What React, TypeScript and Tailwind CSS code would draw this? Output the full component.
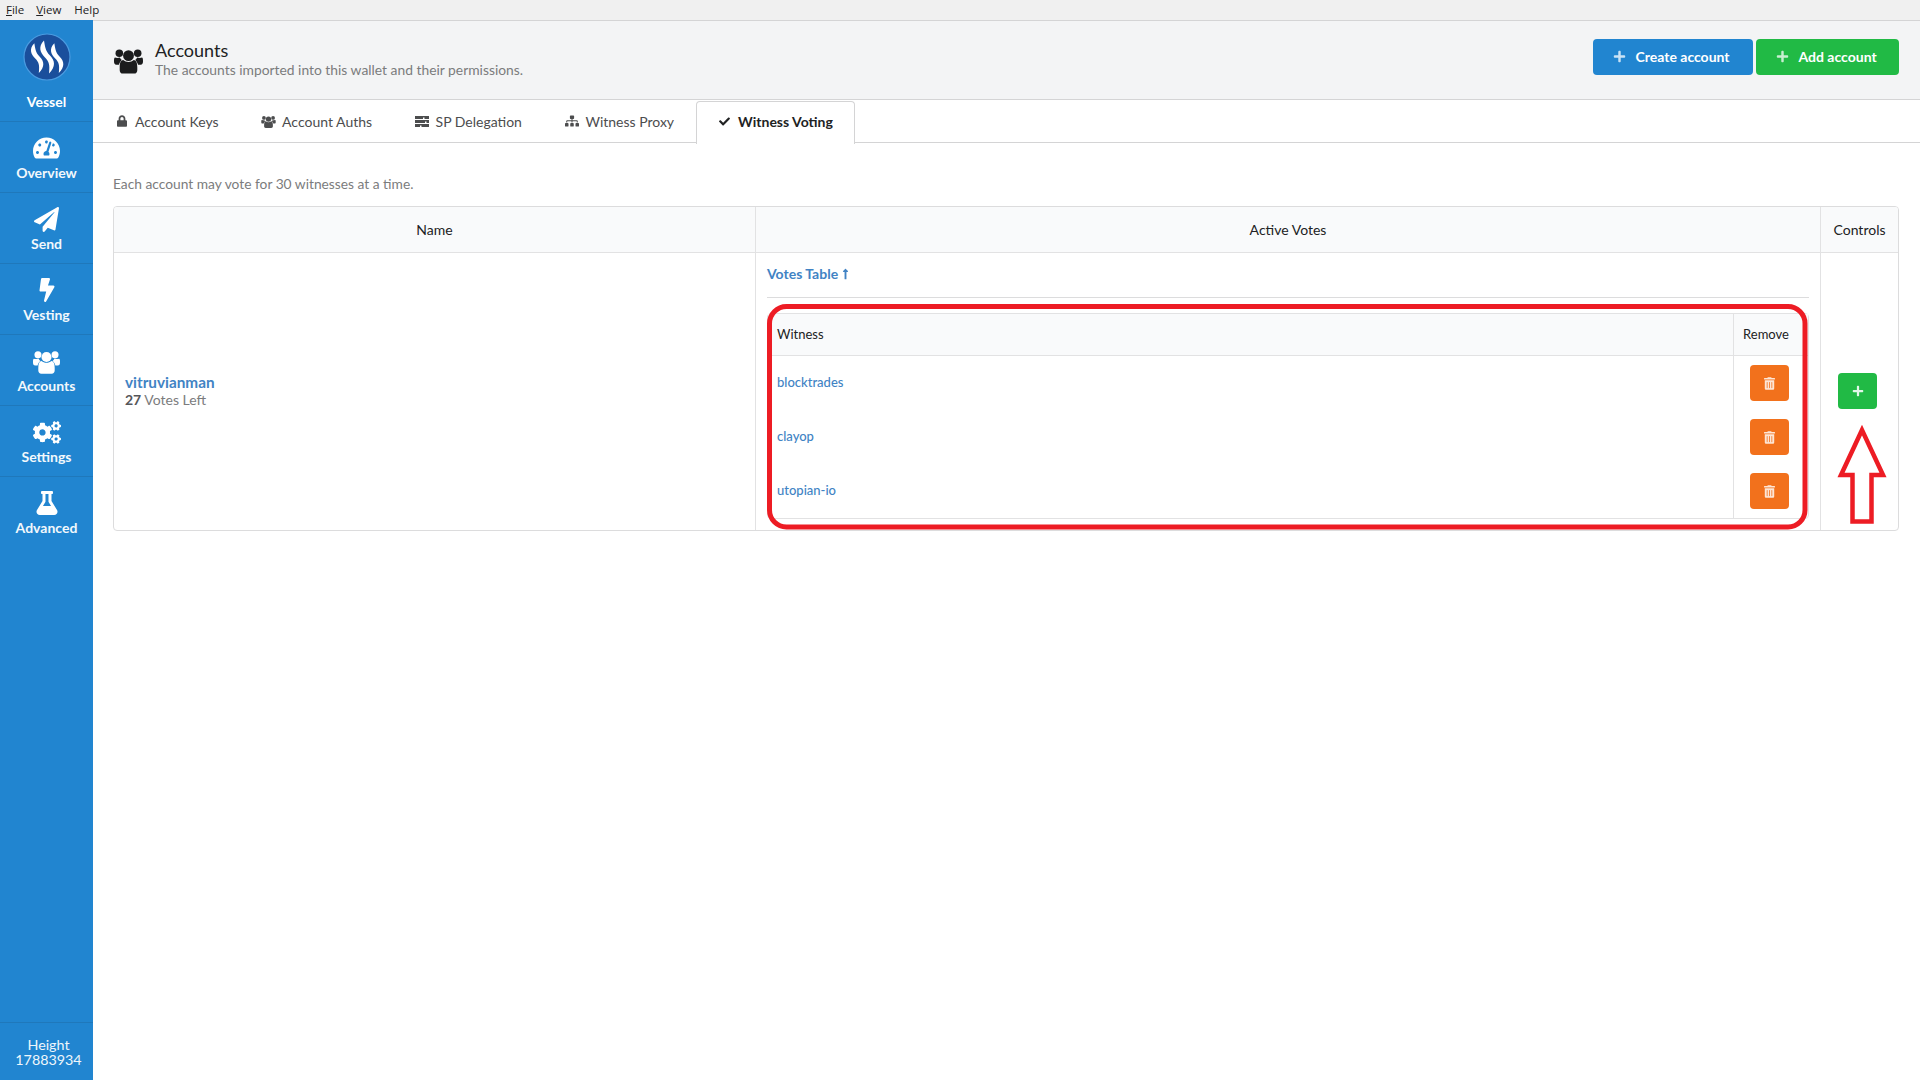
import React from "react";
import { FaTachometerAlt, FaPaperPlane, FaBolt, FaCogs, FaFlask, FaLock, FaSitemap, FaCheck, FaPlus, FaTrashAlt, FaLongArrowAltUp } from "react-icons/fa";

function Users({ className }: { className?: string }) {
  return (
    <svg viewBox="0 0 30 27" className={className} fill="currentColor">
      <circle cx="5.5" cy="6" r="3.9" />
      <circle cx="24.5" cy="6" r="3.9" />
      <circle cx="15" cy="8.5" r="5.6" />
      <path d="M1 10.5c-1 .5-1 2-1 4 0 2 .7 3.400 2.500 3.400h2.600c.5-2 1.500-3.700 3-5-.9-.6-1.600-1.500-2-2.600-1 .6-3.500.7-5.100.2z" />
      <path d="M29 10.500c1 .5 1 2 1 4 0 2-.7 3.400-2.500 3.400h-2.600c-.5-2-1.500-3.700-3-5 .9-.6 1.600-1.500 2-2.600 1 .6 3.500.7 5.100.2z" />
      <path d="M9.500 13c1.400 1.300 3.500 2 5.500 2s4.100-.7 5.500-2c2.500.3 3.600 3 3.600 7.500v3c0 2-1.300 3.500-3.300 3.500H9.200c-2 0-3.300-1.500-3.300-3.500v-3c0-4.500 1.100-7.200 3.600-7.500z" />
    </svg>
  );
}

function Tasks({ className }: { className?: string }) {
  return (
    <svg viewBox="0 0 14 11" className={className} fill="currentColor">
      <path d="M0 0h14v3H9.500V1.500H8V3H0z" />
      <path d="M0 4h14v3h-2.500V5.500H10V7H0z" />
      <path d="M0 8h14v3H6.500V9.500H5V11H0z" />
    </svg>
  );
}

function SteemLogo() {
  const stripe = "M21 9C15 15 17 21 22 26C26 30 27 33 26 42C33 35 32 29 27 24C22 19 22 14 21 9Z";
  return (
    <svg viewBox="0 0 48 48" className="w-12 h-12">
      <circle cx="24" cy="24" r="23" fill="#1a4f9c" stroke="#4a9be0" strokeWidth="1.200" />
      <path d={stripe} fill="#fff" transform="translate(0 -1.500)" />
      <path d={stripe} fill="#fff" transform="translate(-10 3) scale(.9) translate(2.700 -1)" />
      <path d={stripe} fill="#fff" transform="translate(10 3) scale(.9) translate(2.700 -1)" />
    </svg>
  );
}

const nav = [
  { label: "Overview", cls: "border-b", icon: <FaTachometerAlt className="w-[27px] h-[24px]" /> },
  { label: "Send", cls: "border-b", icon: <FaPaperPlane className="w-[25px] h-[25px]" /> },
  { label: "Vesting", cls: "border-b", icon: <FaBolt className="w-[20px] h-[24px]" /> },
  { label: "Accounts", cls: "border-b", icon: <Users className="w-[27px] h-[25px]" /> },
  { label: "Settings", cls: "border-b", icon: <FaCogs className="w-[28px] h-[25px]" /> },
  { label: "Advanced", cls: "", icon: <FaFlask className="w-[24px] h-[24px]" /> },
];

const tabs = [
  { label: "Account Keys", icon: <FaLock className="w-[10px] h-[12px]" /> },
  { label: "Account Auths", icon: <Users className="w-[15px] h-[13px]" /> },
  { label: "SP Delegation", icon: <Tasks className="w-[14px] h-[11px]" /> },
  { label: "Witness Proxy", icon: <FaSitemap className="w-[14px] h-[12px]" /> },
];

const witnesses = ["blocktrades", "clayop", "utopian-io"];

export default function App() {
  return (
    <div className="relative w-[1920px] h-[1080px] overflow-hidden bg-white flex flex-col font-['Lato',sans-serif] text-[14px] text-[#212223]">
      <div className="h-[20px] shrink-0 bg-[#f0f0f0] flex items-center gap-[12px] pl-[6px] font-['Open_Sans',sans-serif] text-[11.500px] text-[#222]">
        <span><u>F</u>ile</span>
        <span><u>V</u>iew</span>
        <span className="ml-[1px]">Help</span>
      </div>
      <div className="flex flex-1 min-h-0">
        <aside className="w-[93px] shrink-0 bg-[#2185d0] text-white flex flex-col">
          <div className="h-[102px] shrink-0 flex flex-col items-center pt-[13px] border-b border-[#1f78bb]">
            <SteemLogo />
            <span className="mt-[11px] font-bold leading-[20px]">Vessel</span>
          </div>
          {nav.map((n) => (
            <div key={n.label} className={`h-[71px] shrink-0 flex flex-col items-center border-[#1f78bb] pt-[13px] ${n.cls}`}>
              <div className="h-[26px] flex items-center justify-center">{n.icon}</div>
              <span className="mt-[2px] font-bold leading-[20px] text-[#f2f8fc]">{n.label}</span>
            </div>
          ))}
          <div className="mt-auto h-[58px] shrink-0 border-t border-[#1f78bb] text-center leading-[15px] pt-[14px] pl-[4px] text-[14.300px] text-[#eef6fb]">
            <div>Height</div>
            <div>17883934</div>
          </div>
        </aside>
        <main className="flex-1 min-w-0 flex flex-col">
          <header className="h-[80px] shrink-0 bg-[#f3f4f5] border-t border-b border-[#d4d4d5] flex items-center pl-[21px] pr-[21px]">
            <Users className="w-[29px] h-[27px] text-[#1b1c1d]" />
            <div className="ml-[12px] flex flex-col pt-[2px] mb-[6px]">
              <span className="text-[18px] leading-[23px] text-[#212223]">Accounts</span>
              <span className="text-[13.850px] leading-[15px] text-[#7b7c7d]">The accounts imported into this wallet and their permissions.</span>
            </div>
            <div className="ml-auto flex gap-[3px] mt-[-6px]">
              <button className="h-[36px] w-[160px] rounded-[4px] bg-[#2185d0] text-white font-bold flex items-center pl-[19px] pb-[2px]">
                <span className="w-[14px] flex justify-center mr-[9.500px] text-[#c9e2f5]"><FaPlus className="w-[13px] h-[13px]" /></span>
                <span>Create account</span>
              </button>
              <button className="h-[36px] w-[143px] rounded-[4px] bg-[#21ba45] text-white font-bold flex items-center pl-[19px] pb-[2px]">
                <span className="w-[14px] flex justify-center mr-[9.500px] text-[#c8eed1]"><FaPlus className="w-[13px] h-[13px]" /></span>
                <span>Add account</span>
              </button>
            </div>
          </header>
          <nav className="h-[43px] shrink-0 border-b border-[#d4d4d5] flex text-[#4c4d4e]">
            {tabs.map((t) => (
              <div key={t.label} className="flex items-center pl-[20.500px] pr-[21.500px]">
                <span className="w-[16.500px] mr-[5px] flex justify-center">{t.icon}</span>
                <span>{t.label}</span>
              </div>
            ))}
            <div className="h-[43px] relative flex items-center pl-[20px] pr-[21px] pb-[4px] bg-white border border-b-0 border-[#d4d4d5] rounded-t-[4px] text-[#212223] font-bold mt-[1px] mb-[-1px]">
              <span className="w-[16.500px] mr-[5px] flex justify-center"><FaCheck className="w-[13px] h-[11px]" /></span>
              <span>Witness Voting</span>
            </div>
          </nav>
          <div className="pt-[33px] pl-[20px] pr-[21px]">
            <p className="text-[#7b7c7d] leading-[16px] text-[13.780px]">Each account may vote for 30 witnesses at a time.</p>
            <div className="mt-[14px] border border-[#dcdcdd] rounded-[4px] grid grid-cols-[642px_1065px_1fr] overflow-hidden">
              <div className="h-[46px] bg-[#f9fafb] border-b border-r border-[#e2e2e3] flex items-center justify-center">Name</div>
              <div className="h-[46px] bg-[#f9fafb] border-b border-r border-[#e2e2e3] flex items-center justify-center">Active Votes</div>
              <div className="h-[46px] bg-[#f9fafb] border-b border-[#e2e2e3] flex items-center justify-center">Controls</div>
              <div className="border-r border-[#e2e2e3] flex flex-col justify-center pl-[11px] pb-[2px]">
                <a className="text-[#4183c4] font-bold text-[15.300px] leading-[18px]">vitruvianman</a>
                <span className="text-[#7b7c7d] leading-[17px] text-[14px]"><span className="text-[#55565a] font-bold">27</span> Votes Left</span>
              </div>
              <div className="border-r border-[#e2e2e3] p-[11px]">
                <div className="h-[20px] flex items-center leading-[20px] font-bold text-[#4183c4]">
                  Votes Table <FaLongArrowAltUp className="w-[11px] h-[12px] ml-[2px]" />
                </div>
                <div className="mt-[13px] border-t border-[#dcdcdd]" />
                <div className="mt-[15px] border border-[#e2e2e3] rounded-[4px] text-[13px]">
                  <div className="flex h-[42px] bg-[#f9fafb] border-b border-[#e2e2e3]">
                    <div className="flex-1 flex items-center pl-[9px]">Witness</div>
                    <div className="w-[75px] border-l border-[#e2e2e3] flex items-center justify-center pr-[10px]">Remove</div>
                  </div>
                  {witnesses.map((w) => (
                    <div key={w} className="flex h-[54px]">
                      <div className="flex-1 flex items-center pl-[9px] text-[#4183c4] font-medium">{w}</div>
                      <div className="w-[75px] border-l border-[#e2e2e3] flex items-center justify-center pr-[4px]">
                        <button className="w-[39px] h-[36px] rounded-[4px] bg-[#f2711c] text-[#fde5d5] flex items-center justify-center">
                          <FaTrashAlt className="w-[11px] h-[13px]" />
                        </button>
                      </div>
                    </div>
                  ))}
                </div>
              </div>
              <div className="flex items-center justify-center pr-[4px] pb-[2px]">
                <button className="w-[39px] h-[36px] rounded-[4px] bg-[#21ba45] text-[#e3f7e8] flex items-center justify-center">
                  <FaPlus className="w-[12px] h-[12px]" />
                </button>
              </div>
            </div>
          </div>
        </main>
      </div>
      <svg viewBox="0 0 1920 1080" className="absolute inset-0 w-[1920px] h-[1080px] pointer-events-none" fill="none" stroke="#ed1c24" strokeWidth="5">
        <rect x="769.500" y="306.500" width="1035.500" height="220.500" rx="17" />
        <path d="M1862 430L1841 475H1852.500V521.500H1871.500V475H1883Z" strokeWidth="4.500" />
      </svg>
    </div>
  );
}
